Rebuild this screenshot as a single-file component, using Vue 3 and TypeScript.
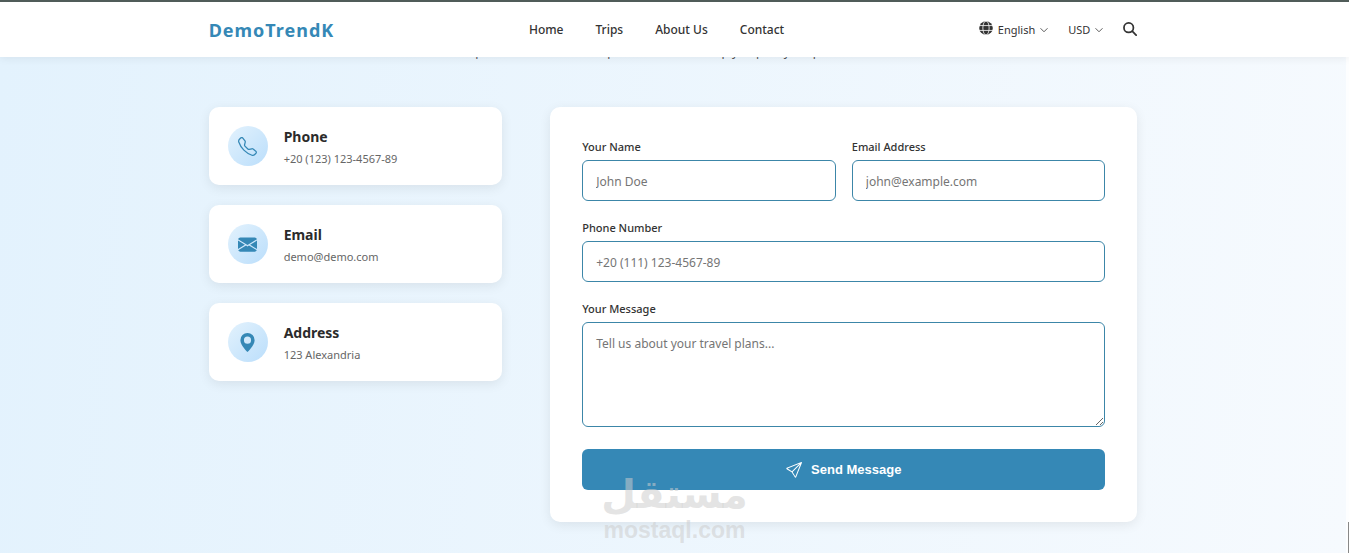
<script setup lang="ts">
import { ref } from 'vue'

interface Contact {
  id: 'phone' | 'email' | 'address'
  title: string
  text: string
}

const links: string[] = ['Home', 'Trips', 'About Us', 'Contact']
const contacts: Contact[] = [
  { id: 'phone', title: 'Phone', text: '+20 (123) 123-4567-89' },
  { id: 'email', title: 'Email', text: 'demo@demo.com' },
  { id: 'address', title: 'Address', text: '123 Alexandria' },
]

const name = ref('')
const email = ref('')
const phone = ref('')
const message = ref('')
</script>

<template>
  <div class="page">
    <header class="header">
      <div class="container bar">
        <a class="brand" href="#">DemoTrendK</a>
        <nav class="nav">
          <a v-for="link in links" :key="link" href="#">{{ link }}</a>
        </nav>
        <div class="tools">
          <button type="button" class="tool">
            <svg class="globe" viewBox="0 0 16 16" aria-hidden="true">
              <circle cx="8" cy="8" r="7.8" fill="currentColor" />
              <g fill="none" stroke="#fff" stroke-width="0.9">
                <ellipse cx="8" cy="8" rx="3.6" ry="8" />
                <path d="M0 5.2h16M0 10.8h16" />
              </g>
            </svg>
            English
            <svg class="chevron" viewBox="0 0 16 16" aria-hidden="true">
              <path d="M1 4.5l7 7 7-7" />
            </svg>
          </button>
          <button type="button" class="tool">
            USD
            <svg class="chevron" viewBox="0 0 16 16" aria-hidden="true">
              <path d="M1 4.5l7 7 7-7" />
            </svg>
          </button>
          <button type="button" class="tool search" aria-label="Search">
            <svg viewBox="0 0 16 16" aria-hidden="true">
              <circle cx="6.5" cy="6.5" r="5.4" />
              <path d="M10.5 10.5l4.5 4.5" />
            </svg>
          </button>
        </div>
      </div>
    </header>

    <main class="main">
      <p class="intro">Have questions? Our travel experts are here to help you plan your perfect vacation.</p>
      <div class="container columns">
        <section class="contacts">
          <article v-for="item in contacts" :key="item.id" class="card contact">
            <span class="badge">
              <svg v-if="item.id === 'phone'" viewBox="0 0 16 16" aria-hidden="true">
                <path d="M3.654 1.328a.678.678 0 0 0-1.015-.063L1.605 2.3c-.483.484-.661 1.169-.45 1.77a17.6 17.6 0 0 0 4.168 6.608 17.6 17.6 0 0 0 6.608 4.168c.601.211 1.286.033 1.77-.45l1.034-1.034a.678.678 0 0 0-.063-1.015l-2.307-1.794a.68.68 0 0 0-.58-.122l-2.19.547a1.75 1.75 0 0 1-1.657-.459L5.482 8.062a1.75 1.75 0 0 1-.46-1.657l.548-2.19a.68.68 0 0 0-.122-.58zM1.884.511a1.745 1.745 0 0 1 2.612.163L6.29 2.98c.329.423.445.974.315 1.494l-.547 2.19a.68.68 0 0 0 .178.643l2.457 2.457a.68.68 0 0 0 .644.178l2.189-.547a1.75 1.75 0 0 1 1.494.315l2.306 1.794c.829.645.905 1.87.163 2.611l-1.034 1.034c-.74.74-1.846 1.065-2.877.702a18.6 18.6 0 0 1-7.01-4.42 18.6 18.6 0 0 1-4.42-7.009c-.362-1.03-.037-2.137.703-2.877z" />
              </svg>
              <svg v-else-if="item.id === 'email'" viewBox="0 0 16 16" aria-hidden="true">
                <path d="M.05 3.555A2 2 0 0 1 2 2h12a2 2 0 0 1 1.95 1.555L8 8.414zM0 4.697v7.104l5.803-3.558zM6.761 8.83l-6.57 4.027A2 2 0 0 0 2 14h12a2 2 0 0 0 1.808-1.144l-6.57-4.027L8 9.586zm3.436-.586L16 11.801V4.697z" />
              </svg>
              <svg v-else viewBox="0 0 16 16" aria-hidden="true">
                <path d="M8 16s6-5.686 6-10A6 6 0 0 0 2 6c0 4.314 6 10 6 10m0-7a3 3 0 1 1 0-6 3 3 0 0 1 0 6" />
              </svg>
            </span>
            <div class="lines">
              <h2 class="title">{{ item.title }}</h2>
              <p class="detail">{{ item.text }}</p>
            </div>
          </article>
        </section>

        <form class="card form" @submit.prevent>
          <div class="row">
            <div class="field">
              <label for="name">Your Name</label>
              <input id="name" v-model="name" type="text" placeholder="John Doe" />
            </div>
            <div class="field">
              <label for="email">Email Address</label>
              <input id="email" v-model="email" type="email" placeholder="john@example.com" />
            </div>
          </div>
          <div class="field">
            <label for="phone">Phone Number</label>
            <input id="phone" v-model="phone" type="tel" placeholder="+20 (111) 123-4567-89" />
          </div>
          <div class="field">
            <label for="message">Your Message</label>
            <textarea id="message" v-model="message" placeholder="Tell us about your travel plans..."></textarea>
          </div>
          <button type="submit" class="send">
            <svg viewBox="0 0 16 16" aria-hidden="true">
              <path d="M15.854.146a.5.5 0 0 1 .11.54l-5.819 14.547a.75.75 0 0 1-1.329.124l-3.178-4.995L.643 7.184a.75.75 0 0 1 .124-1.33L15.314.037a.5.5 0 0 1 .54.11ZM6.636 10.07l2.761 4.338L14.13 2.576zm6.787-8.201L1.591 6.602l4.339 2.76z" />
            </svg>
            Send Message
          </button>
        </form>
      </div>
    </main>

    <div class="scrollbar" aria-hidden="true"></div>

    <div class="watermark">
      <span class="mark-ar" lang="ar" dir="rtl">مستقل</span>
      <span class="mark-en">mostaql.com</span>
    </div>
  </div>
</template>

<style>
body {
  margin: 0;
}
</style>

<style scoped>
.page {
  position: relative;
  display: grid;
  grid-template-columns: 1fr 3px;
  grid-template-rows: auto 1fr;
  min-height: 100vh;
  background: #fdfeff;
  color: #333;
  font-family: "Noto Sans", "Open Sans", sans-serif;
  overflow: hidden;
}

.container {
  width: 69%;
  margin: 0 auto;
}

.header {
  position: relative;
  z-index: 1;
  grid-column: 1 / -1;
  padding-right: 3px;
  border-top: 2px solid #505c59;
  background: #fff;
  box-shadow: 0 2px 8px rgba(0, 0, 0, 0.06);
}

.bar {
  display: flex;
  justify-content: space-between;
  align-items: center;
  height: 55px;
}

.brand {
  color: #3588b6;
  font-size: 18px;
  font-weight: 700;
  letter-spacing: 1px;
  text-decoration: none;
}

.nav {
  display: flex;
  gap: 32px;
}

.nav a {
  color: #333;
  font-size: 12px;
  font-weight: 500;
  text-decoration: none;
}

.tools {
  display: flex;
  justify-content: flex-end;
  align-items: center;
  gap: 20px;
}

.tool {
  display: flex;
  align-items: center;
  gap: 5px;
  padding: 0;
  border: 0;
  background: none;
  color: #333;
  font: 11px "Noto Sans", "Open Sans", sans-serif;
}

.globe {
  width: 14px;
  height: 14px;
  margin-bottom: 3px;
}

.chevron {
  width: 8px;
  height: 8px;
  fill: none;
  stroke: currentColor;
  stroke-width: 1.6;
}

.search {
  margin-bottom: 2px;
}

.search svg {
  width: 14px;
  height: 14px;
  fill: none;
  stroke: currentColor;
  stroke-width: 2;
  stroke-linecap: round;
}

.main {
  background: linear-gradient(95deg, #e3f2fd 0%, #f6fafe 100%);
}

.intro {
  margin: -14px 0 0;
  color: #555;
  font-size: 12px;
  line-height: 18px;
  text-align: center;
}

.columns {
  display: grid;
  grid-template-columns: 1fr 2fr;
  align-items: start;
  gap: 48px;
  padding: 46px 0 31px;
}

.contacts {
  display: grid;
  gap: 20px;
}

.card {
  border-radius: 10px;
  background: #fff;
  box-shadow: 0 3px 12px rgba(0, 0, 0, 0.08);
}

.contact {
  display: flex;
  align-items: center;
  gap: 16px;
  height: 78px;
  padding: 0 19px;
}

.badge {
  display: grid;
  place-items: center;
  width: 40px;
  height: 40px;
  border-radius: 50%;
  background: linear-gradient(135deg, #e3f2fd, #bbdefb);
}

.badge svg {
  width: 19px;
  height: 19px;
  fill: #3588b6;
}

.lines {
  padding-top: 4px;
}

.title {
  margin: 0 0 2px;
  color: #2b2b2b;
  font-size: 14px;
  font-weight: 700;
  line-height: 20px;
}

.detail {
  margin: 0;
  color: #666;
  font-size: 11px;
  line-height: 20px;
}

.form {
  display: flex;
  flex-direction: column;
  gap: 19px;
  padding: 32px;
}

.row {
  display: grid;
  grid-template-columns: 1fr 1fr;
  gap: 16px;
}

.field {
  display: flex;
  flex-direction: column;
  gap: 5px;
}

.field label {
  font-size: 11px;
  font-weight: 500;
  line-height: 16px;
}

.field input,
.field textarea {
  box-sizing: border-box;
  width: 100%;
  height: 41px;
  padding: 1px 13px 0;
  border: 1px solid #3c86a8;
  border-radius: 6px;
  background: #fff;
  color: #333;
  font: 12px "Noto Sans", "Open Sans", sans-serif;
}

.field textarea {
  height: 105px;
  padding: 12px 13px;
  resize: vertical;
}

.field ::placeholder {
  color: #757575;
}

.send {
  display: flex;
  justify-content: center;
  align-items: center;
  gap: 9px;
  height: 41px;
  margin-top: 3px;
  border: 0;
  border-radius: 6px;
  background: #3588b6;
  color: #fff;
  font: 700 13px "Liberation Sans", Arial, sans-serif;
}

.send svg {
  width: 16px;
  height: 16px;
  fill: currentColor;
}

.scrollbar {
  align-self: end;
  justify-self: end;
  width: 1px;
  height: 31px;
  background: #888;
}

.watermark {
  position: absolute;
  bottom: 11px;
  left: 50%;
  z-index: 2;
  display: flex;
  flex-direction: column;
  align-items: center;
  color: rgba(205, 205, 205, 0.55);
  font-weight: 700;
  transform: translateX(-50%);
  pointer-events: none;
}

.mark-ar {
  font-family: "DejaVu Sans", sans-serif;
  font-size: 40px;
  line-height: 48px;
}

.mark-en {
  font-family: "Liberation Sans", Arial, sans-serif;
  font-size: 23px;
  line-height: 24px;
}
</style>
